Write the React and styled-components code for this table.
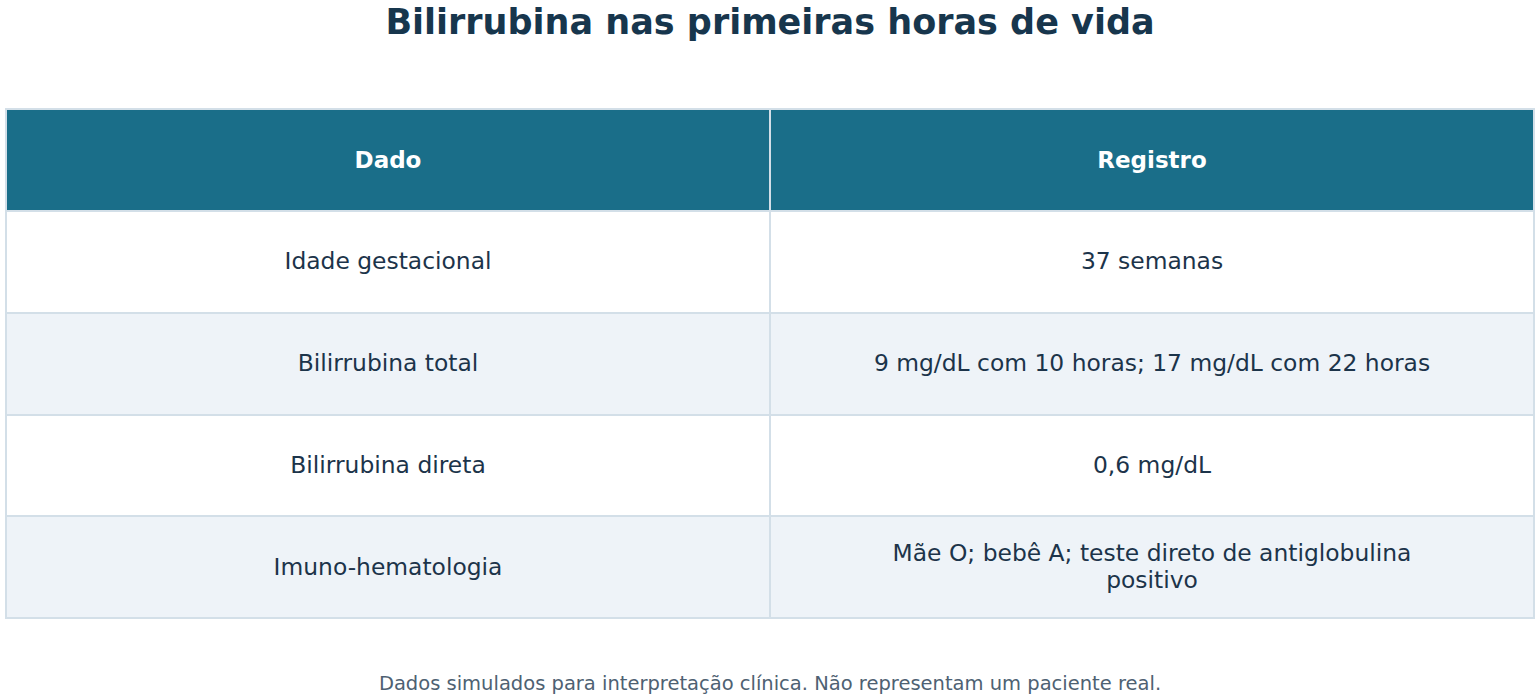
import React from 'react';
import styled, { createGlobalStyle } from 'styled-components';

const GlobalStyle = createGlobalStyle`
  html, body {
    margin: 0;
    padding: 0;
    background: #ffffff;
    font-family: "DejaVu Sans", "Liberation Sans", sans-serif;
  }
`;

const Page = styled.div`
  width: 1540px;
  height: 700px;
  padding: 0 5px;
  box-sizing: border-box;
  display: flex;
  flex-direction: column;
  align-items: stretch;
`;

const Title = styled.h1`
  margin: 0;
  height: 108px;
  text-align: center;
  font-size: 35px;
  line-height: 44px;
  font-weight: 700;
  color: #17364d;
`;

const Table = styled.div`
  display: grid;
  grid-template-columns: 1fr 1fr;
  border: 2px solid #d3dfe8;
  border-bottom: none;
  border-right: none;
`;

const Cell = styled.div`
  height: ${p => (p.$head ? '100px' : '99.75px')};
  display: flex;
  align-items: center;
  justify-content: center;
  text-align: center;
  padding: 0 80px;
  border-right: 2px solid #d3dfe8;
  border-bottom: 2px solid #d3dfe8;
  font-size: ${p => (p.$head ? '23px' : '23.4px')};
  line-height: 27px;
  color: ${p => (p.$head ? '#ffffff' : '#1c344a')};
  font-weight: ${p => (p.$head ? 700 : 400)};
  background: ${p => (p.$head ? '#1a6e89' : p.$alt ? '#eef3f8' : '#ffffff')};
`;

const Note = styled.p`
  margin: 0;
  padding-top: 53px;
  text-align: center;
  font-size: 19.5px;
  color: #4e6172;
`;

const rows = [
  ['Idade gestacional', '37 semanas'],
  ['Bilirrubina total', '9 mg/dL com 10 horas; 17 mg/dL com 22 horas'],
  ['Bilirrubina direta', '0,6 mg/dL'],
  ['Imuno-hematologia', 'Mãe O; bebê A; teste direto de antiglobulina positivo'],
];

export default function App() {
  return (
    <>
      <GlobalStyle />
      <Page>
        <Title>Bilirrubina nas primeiras horas de vida</Title>
        <Table>
          <Cell $head>Dado</Cell>
          <Cell $head>Registro</Cell>
          {rows.map(([a, b], i) => (
            <React.Fragment key={a}>
              <Cell $alt={i % 2 === 1}>{a}</Cell>
              <Cell $alt={i % 2 === 1}>{b}</Cell>
            </React.Fragment>
          ))}
        </Table>
        <Note>Dados simulados para interpretação clínica. Não representam um paciente real.</Note>
      </Page>
    </>
  );
}
